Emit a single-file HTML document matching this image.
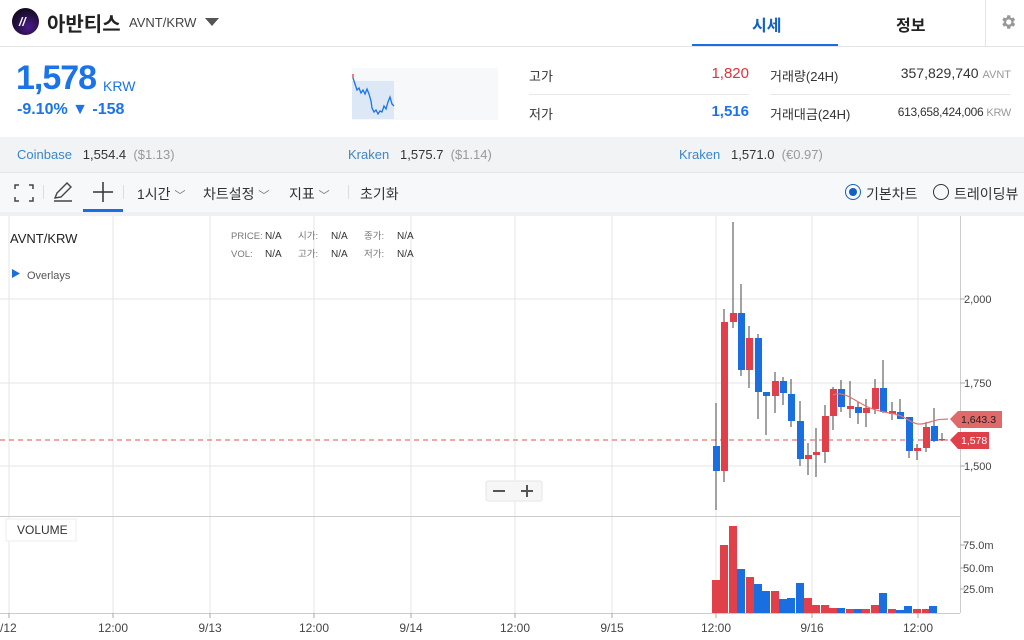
<!DOCTYPE html>
<html><head><meta charset="utf-8"><style>
*{margin:0;padding:0;box-sizing:border-box}
body{width:1024px;height:640px;overflow:hidden;background:#fff;font-family:"Liberation Sans","Noto Sans CJK KR",sans-serif;position:relative;color:#222}
.a{position:absolute;white-space:nowrap}
</style></head><body>
<!-- header -->
<div class="a" style="left:12px;top:8px;width:27px;height:27px;border-radius:50%;background:radial-gradient(circle at 60% 70%,#4a1a8a,#140c24 70%)"></div>
<div class="a" style="left:19px;top:15px;color:#fff;font-size:12px;font-weight:bold;font-style:italic">//</div>
<div class="a" style="left:47px;top:8px;font-size:20px;font-weight:bold;color:#222">아반티스</div>
<div class="a" style="left:129px;top:15px;font-size:13px;color:#444">AVNT/KRW</div>
<div class="a" style="left:205px;top:18px;width:0;height:0;border-left:7px solid transparent;border-right:7px solid transparent;border-top:8px solid #555"></div>
<div class="a" style="left:752px;top:12px;font-size:16px;font-weight:bold;color:#1261c4">시세</div>
<div class="a" style="left:896px;top:12px;font-size:16px;font-weight:bold;color:#222">정보</div>
<div class="a" style="left:692px;top:44px;width:146px;height:3px;background:#1a6fe0"></div>
<div class="a" style="left:985px;top:0;width:1px;height:46px;background:#e4e4e4"></div>
<svg class="a" style="left:999px;top:13px" width="18" height="18" viewBox="0 0 24 24"><path fill="#999" d="M19.4 13a7.5 7.5 0 000-2l2.1-1.6-2-3.5-2.5 1a7.7 7.7 0 00-1.7-1L15 3h-4l-.4 2.9a7.7 7.7 0 00-1.7 1l-2.5-1-2 3.5L6.5 11a7.5 7.5 0 000 2l-2.1 1.6 2 3.5 2.5-1a7.7 7.7 0 001.7 1L11 21h4l.4-2.9a7.7 7.7 0 001.7-1l2.5 1 2-3.5zM13 15.5a3.5 3.5 0 110-7 3.5 3.5 0 010 7z"/></svg>
<div class="a" style="left:0;top:46px;width:1024px;height:1px;background:#e4e4e4"></div>
<!-- price -->
<div class="a" style="left:16px;top:59px;font-size:34px;font-weight:bold;color:#1a73e8;letter-spacing:-1px">1,578</div>
<div class="a" style="left:103px;top:78px;font-size:14px;color:#1a73e8">KRW</div>
<div class="a" style="left:17px;top:101px;font-size:16px;color:#1a73e8;font-weight:bold">-9.10% ▼ -158</div>
<div class="a" style="left:352px;top:68px;width:146px;height:52px;background:#f7f8fa"></div>
<svg class="a" style="left:352px;top:68px" width="146" height="52"><rect x="0" y="13" width="42" height="38" fill="#dde8f7"/><polyline fill="none" stroke="#1a73e8" stroke-width="1.3" points="1,10 3,16 5,22 7,20 9,25 11,22 13,26 15,21 17,26 19,33 20,40 22,44 24,42 26,46 28,43 30,44 32,38 34,41 36,34 38,29 40,36 42,38"/><polyline fill="none" stroke="#e04048" stroke-width="1.3" points="1,6 1,10"/></svg>
<!-- stats -->
<div class="a" style="left:529px;top:66px;font-size:13px;color:#333">고가</div>
<div class="a" style="left:680px;top:65px;width:69px;text-align:right;font-size:15px;color:#e0323c">1,820</div>
<div class="a" style="left:529px;top:94px;width:220px;height:1px;background:#e8e8ec"></div>
<div class="a" style="left:529px;top:104px;font-size:13px;color:#333">저가</div>
<div class="a" style="left:680px;top:103px;width:69px;text-align:right;font-size:15px;color:#1a73e8;font-weight:bold">1,516</div>
<div class="a" style="left:770px;top:66px;font-size:13px;color:#333">거래량(24H)</div>
<div class="a" style="left:770px;top:94px;width:241px;height:1px;background:#e8e8ec"></div>
<div class="a" style="left:770px;top:104px;font-size:13px;color:#333">거래대금(24H)</div>
<div class="a" style="left:850px;top:65px;width:161px;text-align:right;font-size:14px;color:#333">357,829,740 <span style="font-size:11px;color:#999">AVNT</span></div>
<div class="a" style="left:850px;top:105px;width:161px;text-align:right;font-size:12px;color:#333;letter-spacing:-0.3px">613,658,424,006 <span style="font-size:11px;color:#999">KRW</span></div>
<!-- exchanges -->
<div class="a" style="left:0;top:137px;width:1024px;height:36px;background:#f2f3f5;border-bottom:1px solid #e4e4e4"></div>
<div class="a" style="left:17px;top:147px;font-size:13px"><span style="color:#3a86c8">Coinbase</span>&nbsp;&nbsp; <b style="color:#333;font-weight:normal">1,554.4</b>&nbsp; <span style="color:#999">($1.13)</span></div>
<div class="a" style="left:348px;top:147px;font-size:13px"><span style="color:#3a86c8">Kraken</span>&nbsp;&nbsp; <span style="color:#333">1,575.7</span>&nbsp; <span style="color:#999">($1.14)</span></div>
<div class="a" style="left:679px;top:147px;font-size:13px"><span style="color:#3a86c8">Kraken</span>&nbsp;&nbsp; <span style="color:#333">1,571.0</span>&nbsp; <span style="color:#999">(€0.97)</span></div>
<!-- toolbar -->
<div class="a" style="left:0;top:173px;width:1024px;height:39px;background:#f7f8fa"></div>
<svg class="a" style="left:14px;top:184px" width="20" height="18" fill="none" stroke="#444" stroke-width="1.5"><path d="M1 5V1h4M15 1h4v4M19 13v4h-4M5 17H1v-4"/></svg>
<svg class="a" style="left:52px;top:181px" width="22" height="22" fill="none" stroke="#444" stroke-width="1.4"><path d="M3 17l2-5L15 2l4 4L9 16z M2 20h18"/></svg>
<svg class="a" style="left:92px;top:181px" width="22" height="22" stroke="#333" stroke-width="1.5"><path d="M11 1v20M1 11h20"/></svg>
<div class="a" style="left:83px;top:209px;width:40px;height:3px;background:#1a6fe0"></div>
<div class="a" style="left:43px;top:185px;width:1px;height:14px;background:#ddd"></div>
<div class="a" style="left:123px;top:185px;width:1px;height:14px;background:#ddd"></div>
<div class="a" style="left:348px;top:185px;width:1px;height:14px;background:#ddd"></div>
<div class="a" style="left:137px;top:184px;font-size:14px;color:#333">1시간 <span style="font-size:11px;color:#777">﹀</span></div>
<div class="a" style="left:203px;top:184px;font-size:14px;color:#333">차트설정 <span style="font-size:11px;color:#777">﹀</span></div>
<div class="a" style="left:289px;top:184px;font-size:14px;color:#333">지표 <span style="font-size:11px;color:#777">﹀</span></div>
<div class="a" style="left:360px;top:184px;font-size:14px;color:#333">초기화</div>
<div class="a" style="left:845px;top:184px;width:16px;height:16px;border-radius:50%;border:1.5px solid #1261c4"></div>
<div class="a" style="left:849px;top:188px;width:8px;height:8px;border-radius:50%;background:#1261c4"></div>
<div class="a" style="left:866px;top:184px;font-size:14px;color:#333">기본차트</div>
<div class="a" style="left:933px;top:184px;width:16px;height:16px;border-radius:50%;border:1.5px solid #333"></div>
<div class="a" style="left:954px;top:184px;font-size:14px;color:#333">트레이딩뷰</div>
<div class="a" style="left:0;top:212px;width:1024px;height:4px;background:#eef0f3"></div>
<!-- chart -->
<svg class="a" style="left:0;top:216px" width="1024" height="424" viewBox="0 216 1024 424" font-family="Liberation Sans, Noto Sans CJK KR, sans-serif">
<g stroke="#e6e6e6" stroke-width="1">
<path d="M9 216V613M113 216V613M210 216V613M314 216V613M411 216V613M515 216V613M612 216V613M716 216V613M812 216V613M918 216V613"/>
<path d="M0 299H960M0 383H960M0 466H960"/>
</g>
<path d="M0 516.5H960M0 613.5H960M960.5 216V613" stroke="#ccc"/>
<path d="M960 299h5M960 383h5M960 466h5M960 545h5M960 568h5M960 589h5M9 613v5M113 613v5M210 613v5M314 613v5M411 613v5M515 613v5M612 613v5M716 613v5M812 613v5M918 613v5" stroke="#aaa"/>
<path d="M0 440H948" stroke="#e05050" stroke-dasharray="5,4"/>
<g font-size="11" fill="#444">
<text x="964" y="303">2,000</text><text x="964" y="387">1,750</text><text x="964" y="470">1,500</text>
<text x="963" y="549">75.0m</text><text x="963" y="572">50.0m</text><text x="963" y="593">25.0m</text>
</g>
<g font-size="12" fill="#444" text-anchor="middle">
<text x="5" y="632">9/12</text><text x="113" y="632">12:00</text><text x="210" y="632">9/13</text><text x="314" y="632">12:00</text><text x="411" y="632">9/14</text><text x="515" y="632">12:00</text><text x="612" y="632">9/15</text><text x="716" y="632">12:00</text><text x="812" y="632">9/16</text><text x="918" y="632">12:00</text>
</g>
<text x="10" y="243" font-size="13" fill="#222">AVNT/KRW</text>
<path d="M12 269l8 4.5-8 4.5z" fill="#1a6fe0"/>
<text x="27" y="279" font-size="11" fill="#555">Overlays</text>
<g font-size="9.5" fill="#777"><text x="231" y="239">PRICE:</text><text x="231" y="257">VOL:</text><text x="298" y="239">시가:</text><text x="298" y="257">고가:</text><text x="364" y="239">종가:</text><text x="364" y="257">저가:</text></g>
<g font-size="10" fill="#333"><text x="265" y="239">N/A</text><text x="265" y="257">N/A</text><text x="331" y="239">N/A</text><text x="331" y="257">N/A</text><text x="397" y="239">N/A</text><text x="397" y="257">N/A</text></g>
<rect x="486" y="481" width="56" height="20" rx="2" fill="#f6f6f6" stroke="#e6e6e6"/>
<path d="M493 491h12M521 491h12M527 485v12" stroke="#555" stroke-width="2"/>
<rect x="6" y="519" width="70" height="22" fill="#fff" stroke="#eee"/>
<text x="17" y="534" font-size="12" fill="#333">VOLUME</text>
<!-- candles -->
<g stroke="#444" stroke-width="1">
<path d="M716 403V510M724 309V482M733 222V328M741 284V376M749 326V388M758 334V419M766 393V435M775 372V413M783 377V405M791 379V427M800 401V466M808 443V475M816 428V477M825 405V463M833 387V430M841 380V412M850 381V418M858 402V424M866 399V427M875 379V414M883 360V413M892 402V420M900 399V419M909 417V458M917 444V460M926 422V452M934 408V442M942 433V441"/>
</g>
<g fill="#e0404a">
<rect x="721" y="322" width="7" height="149"/><rect x="730" y="313" width="7" height="9"/><rect x="746" y="338" width="7" height="32"/><rect x="772" y="381" width="7" height="15"/><rect x="805" y="455" width="7" height="4"/><rect x="813" y="452" width="7" height="3"/><rect x="822" y="416" width="7" height="36"/><rect x="830" y="389" width="7" height="27"/><rect x="847" y="406" width="7" height="3"/><rect x="863" y="408" width="7" height="5"/><rect x="872" y="388" width="7" height="21"/><rect x="889" y="411" width="7" height="3"/><rect x="914" y="448" width="7" height="3"/><rect x="923" y="427" width="7" height="21"/><rect x="939" y="439" width="6" height="1.5"/>
</g>
<g fill="#1a6fe0">
<rect x="713" y="446" width="7" height="25"/><rect x="738" y="313" width="7" height="57"/><rect x="755" y="338" width="7" height="54"/><rect x="763" y="392" width="7" height="4"/><rect x="780" y="381" width="7" height="12"/><rect x="788" y="394" width="7" height="27"/><rect x="797" y="421" width="7" height="38"/><rect x="838" y="389" width="7" height="18"/><rect x="855" y="407" width="7" height="6"/><rect x="880" y="388" width="7" height="24"/><rect x="897" y="412" width="7" height="7"/><rect x="906" y="417" width="7" height="34"/><rect x="931" y="426" width="7" height="15"/>
</g>
<path d="M833 395C845 390 855 402 870 408S895 412 905 418S918 426 930 422S940 420 948 419" fill="none" stroke="#e87070" stroke-width="1.2"/>
<!-- volume -->
<g fill="#e0404a">
<rect x="712" y="580" width="8" height="33"/><rect x="720" y="545" width="8" height="68"/><rect x="729" y="526" width="8" height="87"/><rect x="746" y="577" width="8" height="36"/><rect x="771" y="591" width="8" height="22"/><rect x="804" y="598" width="8" height="15"/><rect x="812" y="605" width="8" height="8"/><rect x="821" y="605" width="8" height="8"/><rect x="829" y="608" width="8" height="5"/><rect x="846" y="609" width="8" height="4"/><rect x="862" y="609" width="8" height="4"/><rect x="871" y="605" width="8" height="8"/><rect x="888" y="609" width="8" height="4"/><rect x="913" y="609" width="8" height="4"/><rect x="922" y="609" width="8" height="4"/>
</g>
<g fill="#1a6fe0">
<rect x="737" y="569" width="8" height="44"/><rect x="754" y="584" width="8" height="29"/><rect x="762" y="591" width="8" height="22"/><rect x="779" y="599" width="8" height="14"/><rect x="787" y="598" width="8" height="15"/><rect x="796" y="583" width="8" height="30"/><rect x="837" y="608" width="8" height="5"/><rect x="854" y="609" width="8" height="4"/><rect x="879" y="593" width="8" height="20"/><rect x="896" y="610" width="8" height="3"/><rect x="904" y="606" width="8" height="7"/><rect x="929" y="606" width="8" height="7"/>
</g>
<!-- price labels -->
<path d="M950 419l8-8h44v17h-44z" fill="#e06a6a"/>
<text x="961" y="423" font-size="10.5" fill="#222">1,643.3</text>
<path d="M950 440l8-8h31v17h-31z" fill="#e0404a"/>
<text x="961" y="444" font-size="10.5" fill="#fff">1,578</text>
</svg>
</body></html>
